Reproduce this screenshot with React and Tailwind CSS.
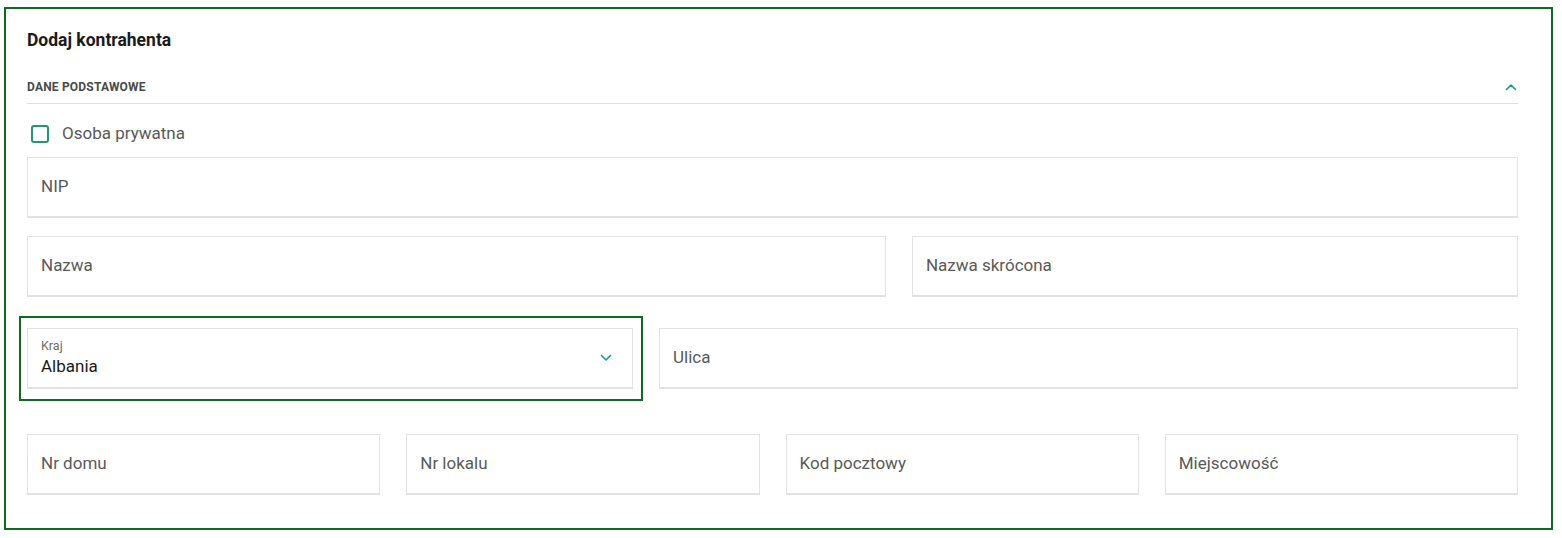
import React from 'react';

const font = { fontFamily: 'Roboto, "Noto Sans", sans-serif' };

function Field({ label, span }) {
    return (
        <div className={`${span} h-[61px] flex items-center pl-[13px] border border-[#e2e2e2] border-b-2 bg-white`}>
            <span className="text-[17px] text-[#595959]">{label}</span>
        </div>
    );
}

function Chevron({ up }) {
    return (
        <svg width="12" height="8" viewBox="0 0 12 8" fill="none" stroke="#139e86" strokeWidth="1.6" strokeLinecap="round" strokeLinejoin="round">
            {up ? <path d="M1.5 6.5 L6 2 L10.5 6.5" /> : <path d="M1.5 1.5 L6 6 L10.5 1.5" />}
        </svg>
    );
}

export default function App() {
    return (
        <div className="bg-white w-[1562px] h-[538px] pt-[7px] pl-[4px]" style={font}>
            <div className="w-[1549px] h-[523px] border-2 border-[#0b6b1f] pl-[21px] pr-[33px]">
                <h1 className="mt-[21px] text-[17.5px] leading-[20px] font-bold text-[#1a1a1a]">Dodaj kontrahenta</h1>

                <div className="mt-[30px] flex items-center justify-between border-b border-[#dedede] pb-[9px]">
                    <span className="text-[12px] leading-[14px] font-bold tracking-[0.2px] text-[#4a4a4a] uppercase">Dane podstawowe</span>
                    <span className="mr-[1px]"><Chevron up /></span>
                </div>

                <label className="mt-[20px] flex items-center gap-[13px] h-[20px] pl-[4px]">
                    <span className="w-[18px] h-[18px] rounded-[3px] border-2 border-[#23976e]"></span>
                    <span className="text-[17px] text-[#595959]">Osoba prywatna</span>
                </label>

                <div className="mt-[13px] grid grid-cols-12 gap-x-[26px]">
                    <Field label="NIP" span="col-span-12" />
                </div>

                <div className="mt-[18px] grid grid-cols-12 gap-x-[26px]">
                    <Field label="Nazwa" span="col-span-7" />
                    <Field label="Nazwa skrócona" span="col-span-5" />
                </div>

                <div className="mt-[31px] grid grid-cols-12 gap-x-[26px]">
                    <div className="col-span-5 relative">
                        <div className="absolute -left-[8px] -right-[10px] -top-[12px] -bottom-[12px] border-2 border-[#0b6b1f]"></div>
                        <div className="relative h-[61px] flex items-center justify-between pl-[13px] pr-[20px] border border-[#e2e2e2] border-b-2 bg-white">
                            <div className="flex flex-col">
                                <span className="text-[12.5px] leading-[14px] text-[#6b6b6b]">Kraj</span>
                                <span className="text-[17px] leading-[22px] text-[#1a1a1a] mt-[2px]">Albania</span>
                            </div>
                            <Chevron />
                        </div>
                    </div>
                    <Field label="Ulica" span="col-span-7" />
                </div>

                <div className="mt-[45px] grid grid-cols-12 gap-x-[26px]">
                    <Field label="Nr domu" span="col-span-3" />
                    <Field label="Nr lokalu" span="col-span-3" />
                    <Field label="Kod pocztowy" span="col-span-3" />
                    <Field label="Miejscowość" span="col-span-3" />
                </div>
            </div>
        </div>
    );
}
